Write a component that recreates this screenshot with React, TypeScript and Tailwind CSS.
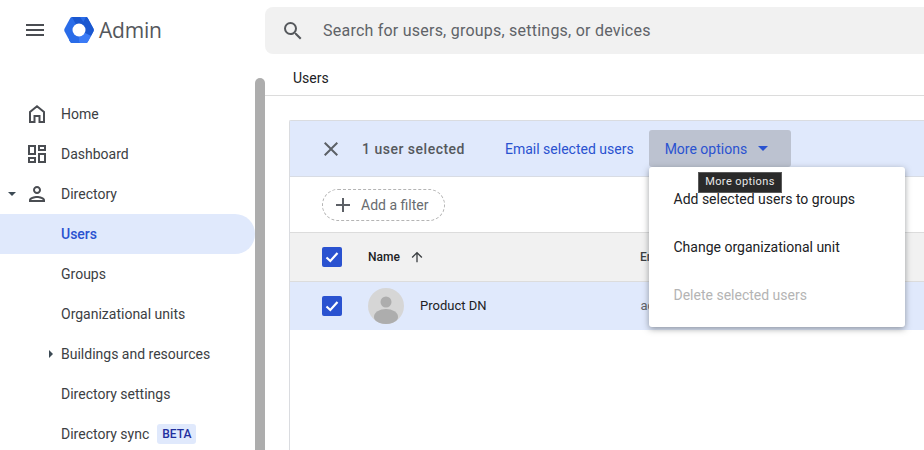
const paths = {
  menu: 'M3 18h18v-2H3v2zm0-5h18v-2H3v2zm0-7v2h18V6H3z',
  search:
    'M15.5 14h-.79l-.28-.27A6.471 6.471 0 0 0 16 9.5 6.5 6.5 0 1 0 9.5 16c1.61 0 3.09-.59 4.23-1.57l.27.28v.79l5 4.99L20.49 19l-4.99-5zm-6 0C7.01 14 5 11.99 5 9.5S7.01 5 9.5 5 14 7.01 14 9.5 11.99 14 9.5 14z',
  dashboard:
    'M19 5v2h-4V5h4M9 5v6H5V5h4m10 8v6h-4v-6h4M9 17v2H5v-2h4M21 3h-8v6h8V3zM11 3H3v10h8V3zm10 8h-8v10h8V11zm-10 4H3v6h8v-6z',
  person:
    'M12 6c1.1 0 2 .9 2 2s-.9 2-2 2-2-.9-2-2 .9-2 2-2m0 10c2.7 0 5.8 1.29 6 2H6c.23-.72 3.31-2 6-2m0-12C9.79 4 8 5.79 8 8s1.79 4 4 4 4-1.79 4-4-1.79-4-4-4zm0 10c-2.67 0-8 1.34-8 4v2h16v-2c0-2.66-5.33-4-8-4z',
  close: 'M19 6.41 17.59 5 12 10.59 6.41 5 5 6.41 10.59 12 5 17.59 6.41 19 12 13.41 17.59 19 19 17.59 13.41 12z',
  add: 'M19 13h-6v6h-2v-6H5v-2h6V5h2v6h6v2z',
  up: 'M4 12l1.41 1.41L11 7.83V20h2V7.83l5.58 5.59L20 12l-8-8-8 8z',
}

function Icon({ d, className }: { d: string; className: string }) {
  return (
    <svg viewBox="0 0 24 24" fill="currentColor" className={className}>
      <path d={d} />
    </svg>
  )
}

function HomeIcon() {
  return (
    <svg viewBox="0 0 24 24" fill="none" stroke="currentColor" strokeWidth="2" className="h-6 w-6">
      <path d="M12 4.300 5 10v10h4.500v-6h5v6H19V10z" />
    </svg>
  )
}

function Logo() {
  return (
    <svg viewBox="0 0 30 28" className="h-[28px] w-[30px]">
      <path d="M8 1h14a2 2 0 0 1 1.700 1L29.400 12.600a3 3 0 0 1 0 2.800L23.700 26a2 2 0 0 1-1.700 1H8a2 2 0 0 1-1.700-1L.6 15.400a3 3 0 0 1 0-2.800L6.300 2A2 2 0 0 1 8 1z" fill="#2a6ce8" />
      <path d="M15 14 22 1a2 2 0 0 1 1.700 1L29.400 12.600a3 3 0 0 1 0 2.800L27 20z" fill="#1a57cf" />
      <path d="M15 14 27 20l-3.300 6a2 2 0 0 1-1.700 1H15z" fill="#3b7bf6" />
      <path d="M15 14 8 1h8l4 6z" fill="#1a57cf" />
      <path d="M15 14 5 24l1.300 2A2 2 0 0 0 8 27h8l-3-5z" fill="#2a6ce8" />
      <circle cx="15" cy="14" r="6.500" fill="#fff" />
    </svg>
  )
}

function Check() {
  return (
    <span className="flex h-5 w-5 items-center justify-center rounded-[2px] bg-[#2a52d0]">
      <svg viewBox="0 0 20 20" fill="none" stroke="#fff" strokeWidth="2.200" className="h-5 w-5">
        <path d="M4.500 10.500 8.300 14l7.200-8" />
      </svg>
    </span>
  )
}

function NavItem({
  label,
  icon,
  caret,
  active,
  children,
}: {
  label: string
  icon?: React.ReactNode
  caret?: 'down' | 'right'
  active?: boolean
  children?: React.ReactNode
}) {
  return (
    <div
      className={`relative flex h-10 items-center rounded-r-[20px] pl-[25px] text-sm ${
        active ? 'bg-[#e0e9fc] font-medium text-[#2a52d0]' : 'text-[#3c4043]'
      }`}
    >
      {caret === 'down' && (
        <span className="absolute left-[8px] top-[18px] h-0 w-0 border-x-[4px] border-t-[4px] border-x-transparent border-t-[#3c4a54]" />
      )}
      {caret === 'right' && (
        <span className="absolute left-[49px] top-[16px] h-0 w-0 border-y-[4px] border-l-[4px] border-y-transparent border-l-[#3c4a54]" />
      )}
      <span className="flex w-6 justify-center text-[#4a4d52]">{icon}</span>
      <span className="ml-3 whitespace-nowrap">{label}</span>
      {children}
    </div>
  )
}

export default function App() {
  return (
    <div className="flex h-[450px] w-[924px] flex-col overflow-hidden bg-white font-['Roboto',sans-serif]">
      <header className="flex h-[60px] shrink-0 items-start">
        <div className="flex h-[60px] w-[265px] shrink-0 items-center pl-[23px]">
          <Icon d={paths.menu} className="h-6 w-6 text-[#4a4d52]" />
          <span className="ml-[17px]">
            <Logo />
          </span>
          <span className="ml-[5px] mt-[2px] font-['Open_Sans',sans-serif] text-[21px] tracking-[-0.2px] text-[#54575c]">Admin</span>
        </div>
        <div className="mt-[7px] flex h-[47px] flex-1 items-center rounded-l-lg bg-[#f1f1f1] pl-4">
          <Icon d={paths.search} className="h-6 w-6 text-[#55585c]" />
          <span className="ml-[18px] text-base tracking-[0.23px] text-[#5f6368]">
            Search for users, groups, settings, or devices
          </span>
        </div>
      </header>

      <div className="flex min-h-0 flex-1">
        <nav className="w-[255px] shrink-0 pt-[34px]">
          <NavItem label="Home" icon={<HomeIcon />} />
          <NavItem label="Dashboard" icon={<Icon d={paths.dashboard} className="h-6 w-6" />} />
          <NavItem label="Directory" caret="down" icon={<Icon d={paths.person} className="h-6 w-6" />} />
          <NavItem label="Users" active />
          <NavItem label="Groups" />
          <NavItem label="Organizational units" />
          <NavItem label="Buildings and resources" caret="right" />
          <NavItem label="Directory settings" />
          <NavItem label="Directory sync">
            <span className="ml-2 rounded-[3px] bg-[#e0e9fc] px-[5px] py-[2px] text-xs font-medium leading-[16px] text-[#1f2f9e]">
              BETA
            </span>
          </NavItem>
        </nav>
        <div className="mt-[18px] w-[10px] shrink-0 rounded-t-[5px] bg-[#adadad]" />

        <main className="relative min-w-0 flex-1">
          <div className="flex h-[36px] items-center border-b border-[#dcdcdc] pl-[28px] pt-[1px] text-sm text-[#202124]">
            Users
          </div>
          <section className="ml-[24px] mt-[24px] h-[400px] rounded-tl-[2px] border-l border-t border-[#dadce0]">
            <div className="flex h-[56px] items-center border-b border-[#d8dce4] bg-[#e0e9fc] pl-[29px]">
              <Icon d={paths.close} className="h-6 w-6 text-[#5c6066]" />
              <span className="ml-[19px] text-sm font-medium tracking-[0.5px] text-[#55585c]">1 user selected</span>
              <span className="ml-[40px] text-sm text-[#2a52d0]">Email selected users</span>
              <div className="ml-[15px] flex h-[37px] w-[142px] items-center rounded-[3px] bg-[#bcc2d0] pl-[16px] text-sm text-[#2a52d0]">
                More options
                <span className="ml-[11px] h-0 w-0 border-x-[5px] border-t-[5px] border-x-transparent border-t-[#2a52d0]" />
              </div>
            </div>
            <div className="flex h-[56px] items-center border-b border-[#dcdcdc] pl-[32px]">
              <div className="flex h-[32px] w-[123px] items-center rounded-full border border-dashed border-[#b4b4b4] pl-[8px] text-sm text-[#696c70]">
                <Icon d={paths.add} className="h-6 w-6 text-[#5c6066]" />
                <span className="ml-[6px]">Add a filter</span>
              </div>
            </div>
            <div className="flex h-[49px] items-center border-b border-[#dcdcdc] bg-[#f1f1f1] pl-[32px]">
              <Check />
              <span className="ml-[26px] text-xs font-medium text-[#202124]">Name</span>
              <Icon d={paths.up} className="ml-[9px] h-4 w-4 text-[#3c4043]" />
              <span className="ml-[215px] text-xs font-medium text-[#3c4043]">Email</span>
            </div>
            <div className="flex h-[48px] items-center bg-[#e0e9fc] pl-[32px]">
              <Check />
              <span className="ml-[26px] h-9 w-9 overflow-hidden rounded-full">
                <svg viewBox="0 0 36 36" className="h-9 w-9">
                  <rect width="36" height="36" fill="#d6d6d6" />
                  <circle cx="18" cy="14" r="5.500" fill="#adadad" />
                  <ellipse cx="18" cy="29" rx="12" ry="8" fill="#adadad" />
                </svg>
              </span>
              <span className="ml-[16px] text-[13px] text-[#202124]">Product DN</span>
              <span className="ml-[154px] text-[13px] text-[#5f6368]">admin</span>
            </div>
          </section>

          <div className="absolute left-[384px] top-[107px] flex h-[160px] w-[256px] flex-col rounded-[3px] bg-white py-[8px] text-sm text-[#202124] shadow-[0_2px_6px_rgba(60,64,67,0.5)]">
            <div className="flex h-[48px] items-center pl-[24.500px]">Add selected users to groups</div>
            <div className="flex h-[48px] items-center pl-[24.500px]">Change organizational unit</div>
            <div className="flex h-[48px] items-center pl-[24.500px] text-[#b4b4b4]">Delete selected users</div>
          </div>
          <div className="absolute left-[433px] top-[112px] flex h-[21px] w-[84px] items-center justify-center border border-[#5a5a5a] bg-[#2a2a2a] text-[11px] tracking-[0.4px] text-[#e8e8e8]">
            More options
          </div>
        </main>
      </div>
    </div>
  )
}
